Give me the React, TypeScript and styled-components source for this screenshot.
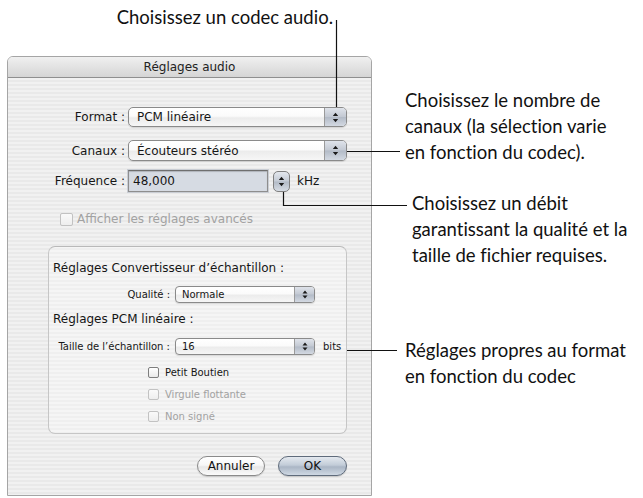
import React from "react";
import styled, { createGlobalStyle } from "styled-components";

const DIALOG_FONT = `"DejaVu Sans", Verdana, sans-serif`;
const NOTE_FONT = `Lato, "Open Sans", sans-serif`;

const GlobalStyle = createGlobalStyle`
  html, body { margin: 0; padding: 0; background: #ffffff; }
  body { width: 643px; height: 498px; overflow: hidden; }
`;

const Page = styled.div`
  position: relative;
  display: flex;
  width: 643px;
  height: 498px;
  overflow: hidden;
  background: #ffffff;
`;

const LeftCol = styled.div`
  flex: none;
  width: 372px;
  padding-left: 7px;
  box-sizing: border-box;
  display: flex;
  flex-direction: column;
`;

const Caption = styled.div`
  height: 56px;
  box-sizing: border-box;
  padding: 5px 39px 0 0;
  text-align: right;
  font-family: ${NOTE_FONT};
  font-size: 18.5px;
  line-height: 24px;
  color: #111;
  white-space: nowrap;
  font-variant-ligatures: none;
`;

const Window = styled.div`
  width: 365px;
  height: 440px;
  box-sizing: border-box;
  border: 1px solid #a5a5a5;
  border-radius: 6px 6px 0 0;
  display: flex;
  flex-direction: column;
  overflow: hidden;
  font-family: ${DIALOG_FONT};
  color: #161616;
`;

const TitleBar = styled.div`
  flex: none;
  height: 21px;
  box-sizing: border-box;
  border-bottom: 1px solid #8f8f8f;
  background: linear-gradient(#f0f0f0, #d5d5d5);
  display: flex;
  align-items: center;
  justify-content: center;
  font-size: 12px;
  color: #222;
`;

const Body = styled.div`
  flex: 1;
  display: flex;
  flex-direction: column;
  background: repeating-linear-gradient(
    180deg,
    #f1f1f1 0px,
    #f1f1f1 2px,
    #e9e9e9 2px,
    #e9e9e9 4px
  );
`;

const FormRow = styled.div<{ $mt: number }>`
  display: flex;
  align-items: center;
  margin-top: ${(p) => p.$mt}px;
`;

const Label = styled.div`
  flex: none;
  width: 117px;
  margin-right: 3px;
  text-align: right;
  font-size: 12px;
  white-space: nowrap;
`;

const PopupBox = styled.div<{ $w: number; $h: number; $small?: boolean }>`
  width: ${(p) => p.$w}px;
  height: ${(p) => p.$h}px;
  box-sizing: border-box;
  display: flex;
  border: 1px solid #8a8a8a;
  border-radius: ${(p) => (p.$small ? 4 : 5)}px;
  overflow: hidden;
  background: linear-gradient(#ffffff, #fbfbfb 45%, #ececec 55%, #f6f6f6);
  box-shadow: 0 1px 1px rgba(0, 0, 0, 0.12);
`;

const PopupText = styled.div<{ $small?: boolean }>`
  flex: 1;
  display: flex;
  align-items: center;
  padding-left: ${(p) => (p.$small ? 6 : 8)}px;
  font-size: ${(p) => (p.$small ? 10 : 12)}px;
  white-space: nowrap;
`;

const PopupArrows = styled.div<{ $small?: boolean }>`
  flex: none;
  width: ${(p) => (p.$small ? 19 : 21)}px;
  display: flex;
  align-items: center;
  justify-content: center;
  border-left: 1px solid #9a9a9a;
  background: linear-gradient(#dfe3ea, #c3c9d3 48%, #b3bbc7 52%, #d3d9e2);
`;

const Field = styled.div`
  width: 140px;
  height: 22px;
  box-sizing: border-box;
  display: flex;
  align-items: center;
  padding-left: 4px;
  border: 1px solid #8e8e8e;
  border-top-color: #6f6f6f;
  box-shadow: inset 0 1px 1px rgba(0, 0, 0, 0.18), 0 0 0 1px #c9cdd4;
  background: #d6dbe3;
  font-size: 12px;
`;

const Stepper = styled.div`
  width: 17px;
  height: 21px;
  box-sizing: border-box;
  margin-left: 5px;
  display: flex;
  align-items: center;
  justify-content: center;
  border: 1px solid #7f7f7f;
  border-radius: 5px;
  background: linear-gradient(#e3e7ed, #c4cbd5 48%, #b2bac6 52%, #d6dce4);
`;

const Unit = styled.span<{ $small?: boolean }>`
  margin-left: ${(p) => (p.$small ? 8 : 7)}px;
  font-size: ${(p) => (p.$small ? 10 : 12)}px;
`;

const CheckRow = styled.label<{ $mt: number; $ml: number; $small?: boolean; $disabled?: boolean }>`
  display: flex;
  align-items: center;
  height: ${(p) => (p.$small ? 16 : 14)}px;
  margin-top: ${(p) => p.$mt}px;
  margin-left: ${(p) => p.$ml}px;
  font-size: ${(p) => (p.$small ? 10 : 12)}px;
  color: ${(p) => (p.$disabled ? "#a2a2a2" : "#161616")};
  white-space: nowrap;
`;

const Box = styled.span<{ $small?: boolean; $disabled?: boolean }>`
  flex: none;
  width: ${(p) => (p.$small ? 11 : 13)}px;
  height: ${(p) => (p.$small ? 11 : 13)}px;
  box-sizing: border-box;
  margin-right: ${(p) => (p.$small ? 6 : 4)}px;
  border: 1px solid ${(p) => (p.$disabled ? "#c2c2c2" : "#7e7e7e")};
  border-radius: 2px;
  background: ${(p) =>
    p.$disabled
      ? "linear-gradient(#fafafa, #eeeeee)"
      : "linear-gradient(#ffffff, #e9e9e9)"};
`;

const Group = styled.div`
  margin: 20px 0 0 40px;
  width: 299px;
  height: 188px;
  box-sizing: border-box;
  padding-top: 13px;
  border: 1px solid #c6c6c6;
  border-top-color: #b9b9b9;
  border-radius: 7px;
  background: rgba(255, 255, 255, 0.28);
  display: flex;
  flex-direction: column;
`;

const Heading = styled.div<{ $mt: number }>`
  margin: ${(p) => p.$mt}px 0 0 4px;
  font-size: 12px;
  line-height: 16px;
  white-space: nowrap;
`;

const SubLabel = styled.div`
  flex: none;
  width: 121px;
  margin-right: 5px;
  text-align: right;
  font-size: 10px;
  white-space: nowrap;
`;

const Buttons = styled.div`
  display: flex;
  justify-content: flex-end;
  gap: 13px;
  padding-right: 24px;
  margin-top: 22px;
`;

const Button = styled.div<{ $w: number; $default?: boolean }>`
  width: ${(p) => p.$w}px;
  height: 20px;
  box-sizing: border-box;
  border-radius: 10px;
  display: flex;
  align-items: center;
  justify-content: center;
  font-size: 12px;
  color: #111;
  border: 1px solid ${(p) => (p.$default ? "#5f6b7b" : "#8a8a8a")};
  background: ${(p) =>
    p.$default
      ? "linear-gradient(#e4e9ef, #c2ccd8 45%, #aab6c5 55%, #cfd8e3)"
      : "linear-gradient(#ffffff, #f7f7f7 45%, #e7e7e7 55%, #fbfbfb)"};
  box-shadow: 0 1px 1px rgba(0, 0, 0, 0.15);
`;

const RightCol = styled.div`
  flex: 1;
  padding-left: 33px;
  display: flex;
  flex-direction: column;
`;

const Note = styled.div<{ $mt: number; $ml?: number }>`
  margin-top: ${(p) => p.$mt}px;
  margin-left: ${(p) => p.$ml ?? 0}px;
  font-family: ${NOTE_FONT};
  font-size: 18.5px;
  line-height: 26px;
  color: #111;
  white-space: nowrap;
  font-variant-ligatures: none;
`;

const Leaders = styled.svg`
  position: absolute;
  left: 0;
  top: 0;
  pointer-events: none;
`;

const Arrows = ({ small }: { small?: boolean }) =>
  small ? (
    <svg width="6" height="9" viewBox="0 0 6 9">
      <path d="M0.5 3.5 L3 0.5 L5.5 3.5 Z M0.5 5.5 L3 8.5 L5.5 5.5 Z" fill="#1b1b1b" />
    </svg>
  ) : (
    <svg width="7" height="11" viewBox="0 0 7 11">
      <path d="M0.8 4 L3.5 0.8 L6.2 4 Z M0.8 7 L3.5 10.2 L6.2 7 Z" fill="#1b1b1b" />
    </svg>
  );

const Popup = ({
  value,
  w,
  h,
  small,
}: {
  value: string;
  w: number;
  h: number;
  small?: boolean;
}) => (
  <PopupBox $w={w} $h={h} $small={small}>
    <PopupText $small={small}>{value}</PopupText>
    <PopupArrows $small={small}>
      <Arrows small={small} />
    </PopupArrows>
  </PopupBox>
);

export default function App() {
  return (
    <>
      <GlobalStyle />
      <Page>
        <LeftCol>
          <Caption>Choisissez un codec audio.</Caption>
          <Window>
            <TitleBar>Réglages audio</TitleBar>
            <Body>
              <FormRow $mt={29}>
                <Label>Format :</Label>
                <Popup value="PCM linéaire" w={219} h={20} />
              </FormRow>
              <FormRow $mt={13}>
                <Label>Canaux :</Label>
                <Popup value="Écouteurs stéréo" w={219} h={21} />
              </FormRow>
              <FormRow $mt={9}>
                <Label>Fréquence :</Label>
                <Field>48,000</Field>
                <Stepper>
                  <Arrows />
                </Stepper>
                <Unit>kHz</Unit>
              </FormRow>
              <CheckRow $mt={20} $ml={52} $disabled>
                <Box $disabled />
                Afficher les réglages avancés
              </CheckRow>
              <Group>
                <Heading $mt={0}>Réglages Convertisseur d’échantillon :</Heading>
                <FormRow $mt={10}>
                  <SubLabel>Qualité :</SubLabel>
                  <Popup value="Normale" w={140} h={17} small />
                </FormRow>
                <Heading $mt={8}>Réglages PCM linéaire :</Heading>
                <FormRow $mt={11}>
                  <SubLabel>Taille de l’échantillon :</SubLabel>
                  <Popup value="16" w={140} h={17} small />
                  <Unit $small>bits</Unit>
                </FormRow>
                <CheckRow $mt={9} $ml={99} $small>
                  <Box $small />
                  Petit Boutien
                </CheckRow>
                <CheckRow $mt={6} $ml={99} $small $disabled>
                  <Box $small $disabled />
                  Virgule flottante
                </CheckRow>
                <CheckRow $mt={6} $ml={99} $small $disabled>
                  <Box $small $disabled />
                  Non signé
                </CheckRow>
              </Group>
              <Buttons>
                <Button $w={68}>Annuler</Button>
                <Button $w={69} $default>
                  OK
                </Button>
              </Buttons>
            </Body>
          </Window>
        </LeftCol>
        <RightCol>
          <Note $mt={87}>
            Choisissez le nombre de
            <br />
            canaux (la sélection varie
            <br />
            en fonction du codec).
          </Note>
          <Note $mt={25} $ml={7}>
            Choisissez un débit
            <br />
            garantissant la qualité et la
            <br />
            taille de fichier requises.
          </Note>
          <Note $mt={69}>
            Réglages propres au format
            <br />
            en fonction du codec
          </Note>
        </RightCol>
        <Leaders width="643" height="498" viewBox="0 0 643 498">
          <g stroke="#111" strokeWidth="1.2" fill="none">
            <path d="M336.5 20 V107" />
            <path d="M347 151.5 H400" />
            <path d="M283.5 192 V205.5 H407" />
            <path d="M347 350.5 H397" />
          </g>
        </Leaders>
      </Page>
    </>
  );
}
